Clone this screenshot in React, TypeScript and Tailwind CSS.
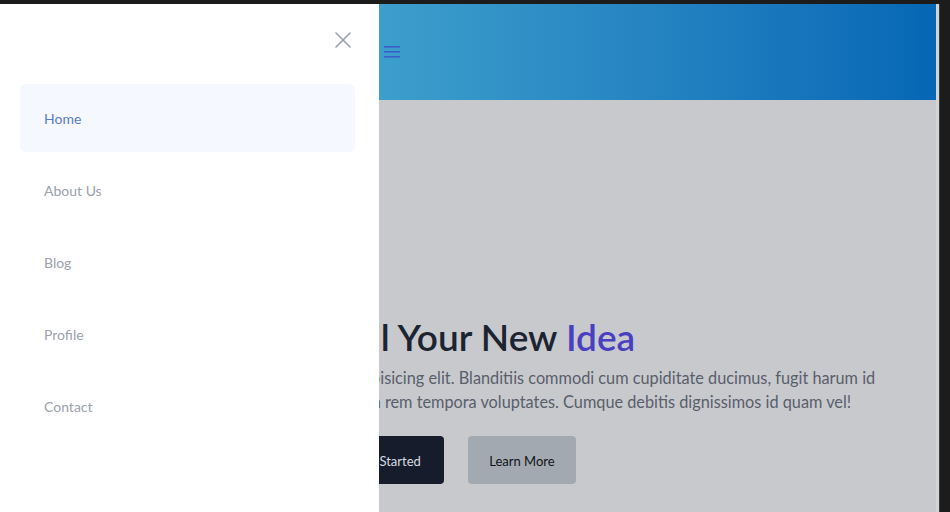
import { X } from "lucide-react";

const NAV_LINKS = ["Home", "About Us", "Blog", "Profile", "Contact"];

const FONT = "font-['Lato','Noto_Sans',sans-serif]";

const Hamburger = () => (
    <svg width="16" height="12" viewBox="0 0 16 12" className="text-[#3a5fc9]">
        <rect x="0" y="0" width="16" height="1.6" fill="currentColor" />
        <rect x="0" y="5" width="16" height="1.6" fill="currentColor" />
        <rect x="0" y="10" width="16" height="1.6" fill="currentColor" />
    </svg>
);

const Drawer = () => (
    <aside className="absolute inset-y-0 left-0 flex w-[379px] flex-col bg-white">
        <div className="flex h-[72px] items-center justify-end pr-[22px]">
            <X className="size-[28px] text-[#9aa1ad]" strokeWidth={1.4} />
        </div>
        <nav className="mt-[8px] flex flex-col gap-[4px] pl-[20px] pr-[24px]">
            {NAV_LINKS.map((label, i) => (
                <a
                    key={label}
                    className={
                        i === 0
                            ? "flex h-[68px] items-center rounded-md bg-[#f5f8ff] pl-[24px] text-[14px] text-[#5b7bc9]"
                            : "flex h-[68px] items-center rounded-md pl-[24px] text-[14px] text-[#9ba1ad]"
                    }
                >
                    {label}
                </a>
            ))}
        </nav>
    </aside>
);

export default function App() {
    return (
        <div className={`flex h-[512px] w-[950px] flex-col overflow-hidden bg-[#1c1c1c] pt-[4px] ${FONT}`}>
            <div className="flex flex-1">
                <div className="relative flex flex-1 flex-col bg-[#c8c9cd]">
                    <header className="flex h-[96px] items-center bg-gradient-to-r from-[#5ec5da] to-[#0567b5] pl-[384px]">
                        <Hamburger />
                    </header>
                    {/* page content sits under the open drawer; only the part right of it shows */}
                    <div className="ml-[379px] overflow-hidden">
                        <section className="-ml-[379px] flex flex-col pt-[214px]">
                            <h1 className="ml-[286px] whitespace-nowrap text-[37px] leading-[46px] font-semibold text-[#1d2431]">
                                Unveil Your New <span className="text-[#4a3fc0]">Idea</span>
                            </h1>
                            <p className="mt-[6px] whitespace-nowrap text-[16.3px] leading-[24px] text-[#595f6b]">
                                <span className="block pl-[64px]">
                                    Lorem ipsum dolor sit amet consectetur adipisicing elit. Blanditiis commodi cum cupiditate ducimus, fugit harum id
                                </span>
                                <span className="block pl-[9px]">
                                    necessitatibus odio quam quasi, quibusdam omnis in rem tempora voluptates. Cumque debitis dignissimos id quam vel!
                                </span>
                            </p>
                            <div className="mt-[22px] ml-[332px] flex gap-[24px]">
                                <button className="h-[48px] w-[112px] rounded-[4px] bg-[#161c2b] pt-[3px] text-[13px] text-[#d8dbe2]">Get Started</button>
                                <button className="h-[48px] w-[108px] rounded-[4px] bg-[#a3a9b1] pt-[3px] text-[13px] text-[#111318]">Learn More</button>
                            </div>
                        </section>
                    </div>
                    <Drawer />
                </div>
                <div className="w-[3px] bg-[#d3d4d7]" />
                <div className="w-[11px] border-l border-[#3a3a3a] bg-[#1c1c1c]" />
            </div>
        </div>
    );
}
